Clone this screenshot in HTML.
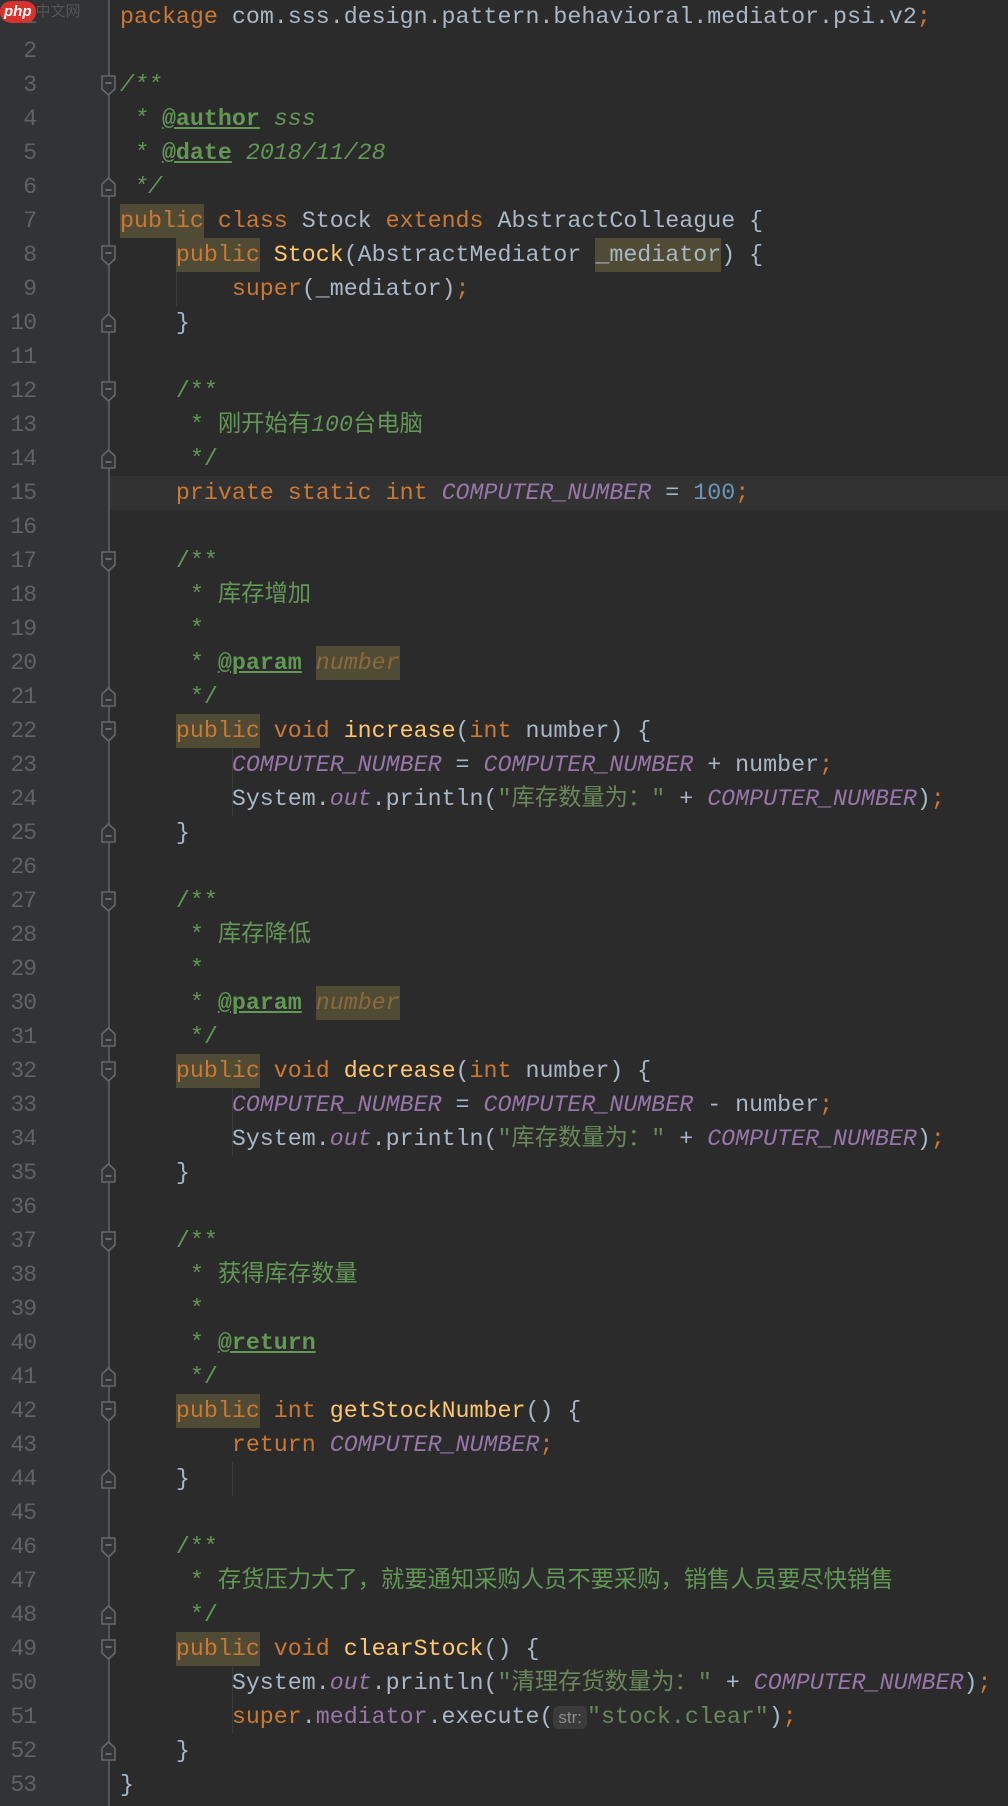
<!DOCTYPE html>
<html><head><meta charset="utf-8"><style>
html,body{margin:0;padding:0;background:#2b2b2b;width:1008px;height:1806px;overflow:hidden}
#g{position:absolute;left:0;top:0;width:109px;height:1806px;background:#313335}
#gl{position:absolute;left:108px;top:0;width:2px;height:1806px;background:#555}
.ln{position:absolute;left:0;width:36px;text-align:right;color:#606366;font:23px/34px "Liberation Mono","DejaVu Sans Mono",monospace;letter-spacing:-1px}
.l{position:absolute;left:120px;white-space:pre;font:23.3px/34px "Liberation Mono","Noto Sans CJK SC",monospace;color:#a9b7c6}
.cur{position:absolute;left:110px;width:898px;height:34px;top:476px;background:#323232}
.k{color:#cc7832}.c{color:#629755}.ci{color:#629755;font-style:italic}.t{color:#629755;font-weight:bold;text-decoration:underline;font-style:normal}
.s{color:#6a8759}.n{color:#6897bb}.p{color:#9876aa;font-style:italic}.pv{color:#9876aa}.m{color:#ffc66d}
.h{background:#4f4b34;display:inline-block;height:34px}
.pn{color:#8a6a3a;font-style:italic;background:#4f4b34;display:inline-block;height:34px}
.hint{background:#3b3b3b;color:#8c8c8c;font-size:17px;border-radius:6px;padding:2px 5px;font-family:"Liberation Sans",sans-serif}
.ig{position:absolute;width:1px;background:#3b3b3b}
svg.f{position:absolute;left:100px}
</style></head><body>
<div id="g"></div>
<div class="cur"></div>
<div id="gl"></div>
<div class="ig" style="left:176px;top:272px;height:34px"></div>
<div class="ig" style="left:232px;top:748px;height:68px"></div>
<div class="ig" style="left:232px;top:1088px;height:68px"></div>
<div class="ig" style="left:232px;top:1462px;height:34px"></div>
<div class="ig" style="left:232px;top:1666px;height:68px"></div>
<svg width="0" height="0" style="position:absolute"><defs>
<g id="o"><path d="M2 2H15V15L8.5 21L2 15Z" fill="#313335" stroke="#666" stroke-width="1.6"/><path d="M5.5 9H11.5" stroke="#777" stroke-width="1.6"/></g>
<g id="cl"><path d="M2 20H15V8L8.5 2L2 8Z" fill="#313335" stroke="#666" stroke-width="1.6"/><path d="M5.5 14H11.5" stroke="#777" stroke-width="1.6"/></g>
</defs></svg>
<div id="fold"></div>
<div id="code"></div>
<div style="position:absolute;left:0;top:0;height:24px;font:bold 15px/22px 'Liberation Sans',sans-serif">
<span style="display:inline-block;background:#d9322c;color:#fff;border-radius:12px/10px;padding:0 4px;font-style:italic">php</span><span style="color:#555;font:15px 'Noto Sans CJK SC',sans-serif">中文网</span></div>
<script>
var L=[
'<span class="k">package</span> com.sss.design.pattern.behavioral.mediator.psi.v2<span class="k">;</span>',
'',
'<span class="ci">/**</span>',
'<span class="ci"> * </span><span class="t">@author</span><span class="ci"> sss</span>',
'<span class="ci"> * </span><span class="t">@date</span><span class="ci"> 2018/11/28</span>',
'<span class="ci"> */</span>',
'<span class="k h">public</span> <span class="k">class</span> Stock <span class="k">extends</span> AbstractColleague {',
'    <span class="k h">public</span> <span class="m">Stock</span>(AbstractMediator <span class="h">_mediator</span>) {',
'        <span class="k">super</span>(_mediator)<span class="k">;</span>',
'    }',
'',
'    <span class="c">/**</span>',
'<span class="c">     * 刚开始有<i>100</i>台电脑</span>',
'<span class="c">     */</span>',
'    <span class="k">private static int</span> <span class="p">COMPUTER_NUMBER</span> = <span class="n">100</span><span class="k">;</span>',
'',
'    <span class="c">/**</span>',
'<span class="c">     * 库存增加</span>',
'<span class="c">     *</span>',
'<span class="c">     * </span><span class="t">@param</span> <span class="pn">number</span>',
'<span class="c">     */</span>',
'    <span class="k h">public</span> <span class="k">void</span> <span class="m">increase</span>(<span class="k">int</span> number) {',
'        <span class="p">COMPUTER_NUMBER</span> = <span class="p">COMPUTER_NUMBER</span> + number<span class="k">;</span>',
'        System.<span class="p">out</span>.println(<span class="s">"库存数量为："</span> + <span class="p">COMPUTER_NUMBER</span>)<span class="k">;</span>',
'    }',
'',
'    <span class="c">/**</span>',
'<span class="c">     * 库存降低</span>',
'<span class="c">     *</span>',
'<span class="c">     * </span><span class="t">@param</span> <span class="pn">number</span>',
'<span class="c">     */</span>',
'    <span class="k h">public</span> <span class="k">void</span> <span class="m">decrease</span>(<span class="k">int</span> number) {',
'        <span class="p">COMPUTER_NUMBER</span> = <span class="p">COMPUTER_NUMBER</span> - number<span class="k">;</span>',
'        System.<span class="p">out</span>.println(<span class="s">"库存数量为："</span> + <span class="p">COMPUTER_NUMBER</span>)<span class="k">;</span>',
'    }',
'',
'    <span class="c">/**</span>',
'<span class="c">     * 获得库存数量</span>',
'<span class="c">     *</span>',
'<span class="c">     * </span><span class="t">@return</span>',
'<span class="c">     */</span>',
'    <span class="k h">public</span> <span class="k">int</span> <span class="m">getStockNumber</span>() {',
'        <span class="k">return</span> <span class="p">COMPUTER_NUMBER</span><span class="k">;</span>',
'    }',
'',
'    <span class="c">/**</span>',
'<span class="c">     * 存货压力大了，就要通知采购人员不要采购，销售人员要尽快销售</span>',
'<span class="c">     */</span>',
'    <span class="k h">public</span> <span class="k">void</span> <span class="m">clearStock</span>() {',
'        System.<span class="p">out</span>.println(<span class="s">"清理存货数量为："</span> + <span class="p">COMPUTER_NUMBER</span>)<span class="k">;</span>',
'        <span class="k">super</span>.<span class="pv">mediator</span>.execute(<span class="hint">str:</span><span class="s">"stock.clear"</span>)<span class="k">;</span>',
'    }',
'}'];
var h='';for(var i=0;i<L.length;i++){h+='<div class="ln" style="top:'+(i*34)+'px">'+(i+1)+'</div><div class="l" style="top:'+(i*34)+'px">'+(L[i]||' ')+'</div>';}
document.getElementById('code').innerHTML=h;
var op=[3,8,12,17,22,27,32,37,42,46,49],cl=[6,10,14,21,25,31,35,41,44,48,52],f='';
op.forEach(function(n){f+='<svg class="f" width="18" height="24" style="top:'+((n-1)*34+6)+'px"><use href="#o"/></svg>';});
cl.forEach(function(n){f+='<svg class="f" width="18" height="24" style="top:'+((n-1)*34+6)+'px"><use href="#cl"/></svg>';});
document.getElementById('fold').innerHTML=f;
</script>
</body></html>
